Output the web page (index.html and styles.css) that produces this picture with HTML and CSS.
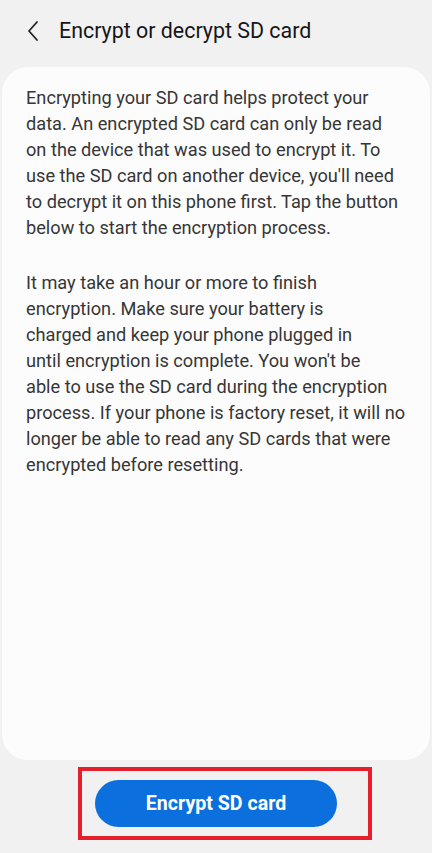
FILE: index.html
```html
<!DOCTYPE html>
<html lang="en">
<head>
<meta charset="utf-8">
<link rel="stylesheet" href="styles.css">
</head>
<body>
<div class="screen">
  <header class="topbar">
    <span class="back">
      <svg width="14" height="22" viewBox="0 0 14 22"><path d="M11 2 L3 11 L11 20" fill="none" stroke="#222" stroke-width="1.8" stroke-linecap="round" stroke-linejoin="round"/></svg>
    </span>
    <h1 class="title">Encrypt or decrypt SD card</h1>
  </header>
  <main class="card">
    <p class="para">Encrypting your SD card helps protect your<br>data. An encrypted SD card can only be read<br>on the device that was used to encrypt it. To<br>use the SD card on another device, you'll need<br>to decrypt it on this phone first. Tap the button<br>below to start the encryption process.</p>
    <p class="para">It may take an hour or more to finish<br>encryption. Make sure your battery is<br>charged and keep your phone plugged in<br>until encryption is complete. You won't be<br>able to use the SD card during the encryption<br>process. If your phone is factory reset, it will no<br>longer be able to read any SD cards that were<br>encrypted before resetting.</p>
  </main>
  <footer class="footer">
    <div class="highlight">
      <button class="btn">Encrypt SD card</button>
    </div>
  </footer>
</div>
</body>
</html>
```
FILE: styles.css
```css
html, body {
  margin: 0;
  padding: 0;
}
body {
  background: #f1f1f1;
  font-family: Roboto, "Noto Sans", sans-serif;
}
.screen {
  height: 853px;
  display: flex;
  flex-direction: column;
}
.topbar {
  height: 67px;
  display: flex;
  align-items: flex-start;
  padding-top: 19px;
  box-sizing: border-box;
}
.back {
  width: 14px;
  margin-left: 26px;
  margin-right: 19px;
  display: flex;
  padding-top: 1px;
}
.title {
  margin: 0;
  font-size: 21.4px;
  font-weight: 400;
  color: #161616;
  line-height: 24px;
}
.card {
  flex: 1;
  margin: 0 2px;
  background: #fcfcfc;
  border-radius: 26px;
  padding: 18px 0 0 24px;
  max-height: 693px;
}
.para {
  margin: 0 0 29px;
  font-size: 18.2px;
  line-height: 26px;
  color: #363636;
  white-space: nowrap;
}
.footer {
  height: 93px;
  display: flex;
  padding-top: 7px;
  padding-left: 78px;
  box-sizing: border-box;
}
.highlight {
  width: 294px;
  height: 73px;
  box-sizing: border-box;
  border: 4px solid #e5202c;
  display: flex;
  align-items: center;
  padding-left: 13px;
}
.btn {
  width: 242px;
  height: 47px;
  border: none;
  border-radius: 24px;
  background: #0b6fdd;
  color: #fff;
  font-family: Roboto, sans-serif;
  font-weight: 700;
  font-size: 19.6px;
  padding: 0;
}
```
